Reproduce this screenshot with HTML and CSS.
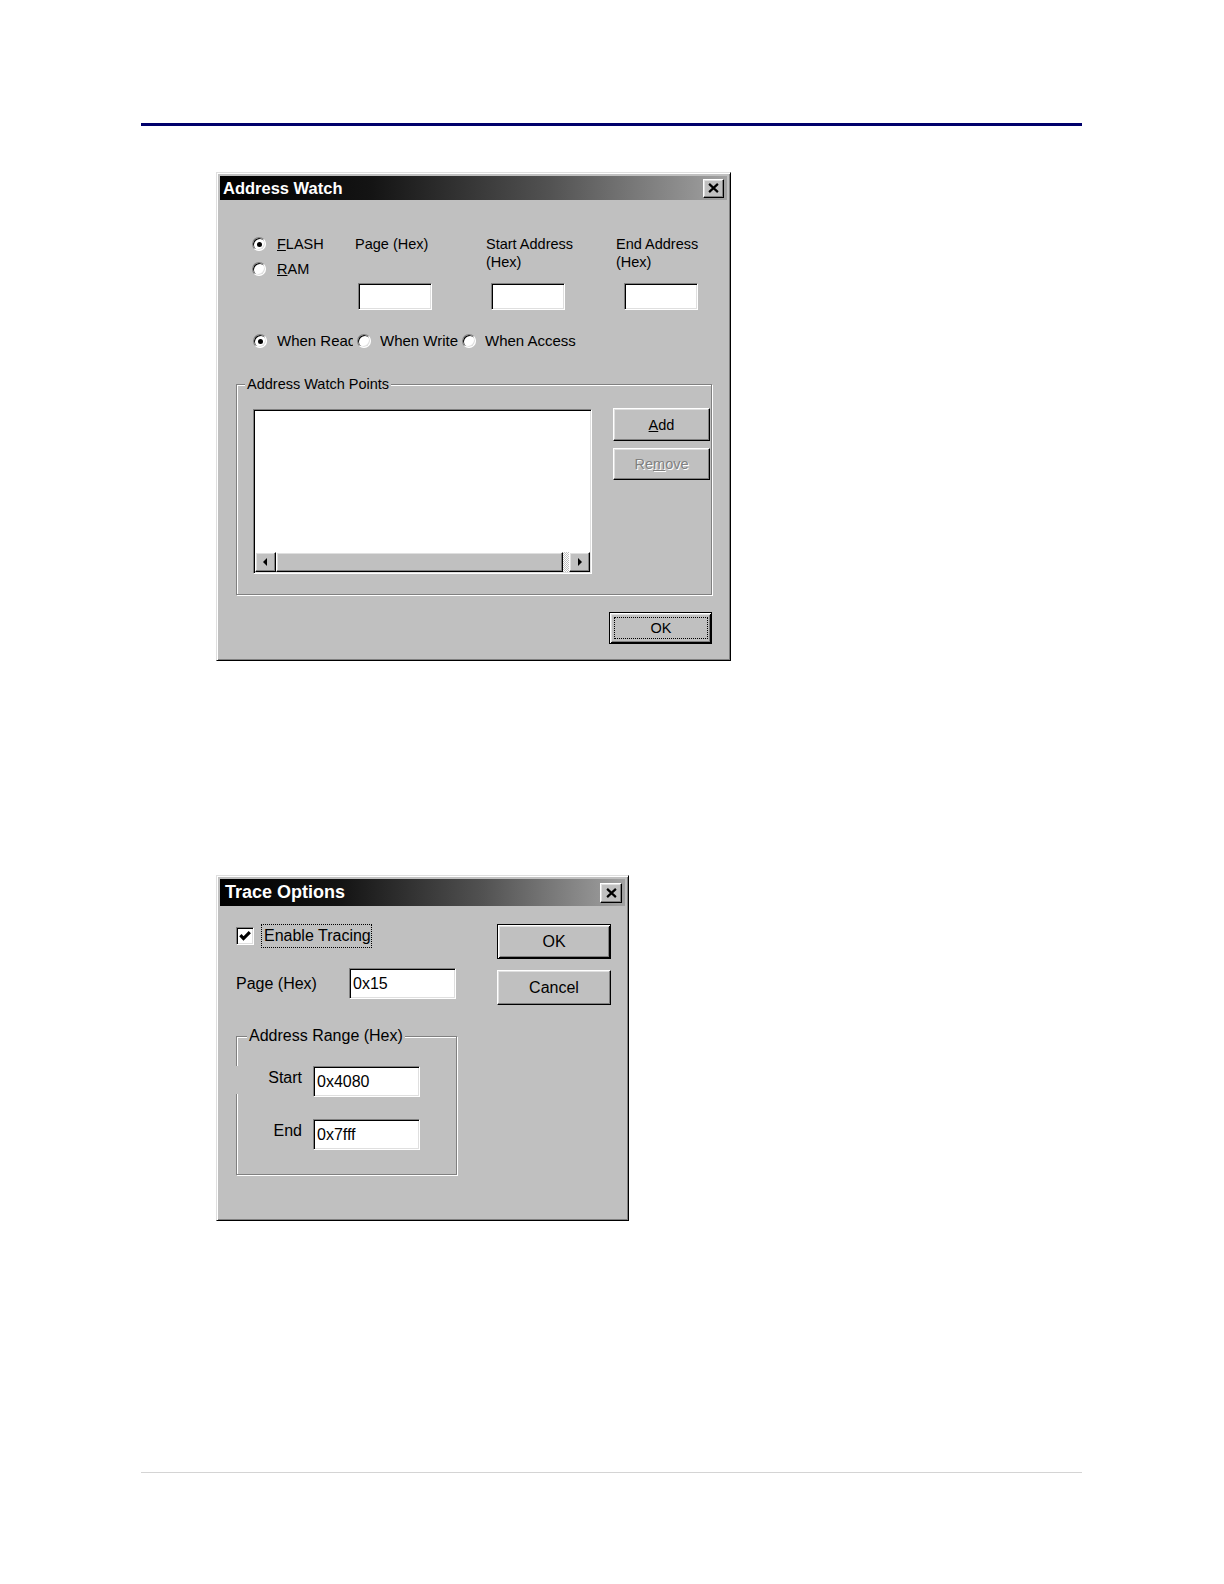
FILE: index.html
```html
<!DOCTYPE html>
<html lang="en">
<head>
<meta charset="utf-8">
<title>Address Watch / Trace Options</title>
<link rel="stylesheet" href="styles.css">
</head>
<body>
<div class="page">
  <div class="rule-top"></div>

  <div class="win aw">
    <div class="titlebar">
      <span>Address Watch</span>
      <span class="close raised"><svg width="11" height="10" viewBox="0 0 8 7"><path d="M0.8 0.5 L7.2 6.5 M7.2 0.5 L0.8 6.5" stroke="#000" stroke-width="1.6" fill="none"/></svg></span>
    </div>
    <div class="aw-body">
      <div class="aw-grid">
        <div class="radios">
          <div class="radio-item"><span class="radio on"></span><span class="lbl"><u>F</u>LASH</span></div>
          <div class="radio-item"><span class="radio"></span><span class="lbl"><u>R</u>AM</span></div>
        </div>
        <div class="col-label c2">Page (Hex)</div>
        <div class="col-label c3">Start Address<br>(Hex)</div>
        <div class="col-label c4">End Address<br>(Hex)</div>
        <div class="field sunken f2"></div>
        <div class="field sunken f3"></div>
        <div class="field sunken f4"></div>
      </div>

      <div class="when-row">
        <div class="radio-item w1"><span class="radio on"></span><span class="lbl">When Read</span></div>
        <div class="radio-item w2"><span class="radio"></span><span class="lbl">When Write</span></div>
        <div class="radio-item w3"><span class="radio"></span><span class="lbl">When Access</span></div>
      </div>

      <fieldset class="group aw-group">
        <legend>Address Watch Points</legend>
        <div class="aw-group-inner">
          <div class="listbox sunken">
            <div class="hscroll">
              <span class="sb-btn raised"><svg width="5" height="8" viewBox="0 0 5 8"><path d="M4 0 L0 4 L4 8 Z" fill="#000"/></svg></span>
              <span class="sb-thumb raised"></span>
              <span class="sb-track"></span>
              <span class="sb-btn raised"><svg width="5" height="8" viewBox="0 0 5 8"><path d="M1 0 L5 4 L1 8 Z" fill="#000"/></svg></span>
            </div>
          </div>
          <div class="btn-col">
            <div class="btn raised add"><u>A</u>dd</div>
            <div class="btn raised remove">Re<u>m</u>ove</div>
          </div>
        </div>
      </fieldset>

      <div class="ok-row">
        <div class="btn default aw-ok"><span class="focus">OK</span></div>
      </div>
    </div>
  </div>

  <div class="win to">
    <div class="titlebar">
      <span>Trace Options</span>
      <span class="close raised"><svg width="11" height="10" viewBox="0 0 8 7"><path d="M0.8 0.5 L7.2 6.5 M7.2 0.5 L0.8 6.5" stroke="#000" stroke-width="1.6" fill="none"/></svg></span>
    </div>
    <div class="to-body">
      <div class="to-left">
        <div class="check-row">
          <span class="check sunken"><svg width="12" height="12" viewBox="0 0 8 8"><path d="M0.9 3.4 L3 5.7 L7.2 1.4" stroke="#000" stroke-width="2.1" fill="none"/></svg></span>
          <span class="check-label">Enable Tracing</span>
        </div>
        <div class="page-row">
          <span class="page-label">Page (Hex)</span>
          <div class="field sunken to-field">0x15</div>
        </div>
        <fieldset class="group to-group">
          <legend>Address Range (Hex)</legend>
          <div class="to-group-inner">
            <div class="range-row gap-row">
              <span class="range-label">Start</span>
              <div class="field sunken to-field">0x4080</div>
            </div>
            <div class="range-row">
              <span class="range-label">End</span>
              <div class="field sunken to-field">0x7fff</div>
            </div>
          </div>
        </fieldset>
      </div>
      <div class="to-right">
        <div class="btn default to-ok">OK</div>
        <div class="btn raised to-cancel">Cancel</div>
      </div>
    </div>
  </div>

  <div class="rule-bottom"></div>
</div>
</body>
</html>
```

FILE: styles.css
```css
* { box-sizing: border-box; }

body {
  margin: 0;
  background: #fff;
  font-family: "Liberation Sans", Arial, sans-serif;
  color: #000;
}

.page {
  width: 1224px;
  min-height: 1584px;
  padding: 123px 0 0 141px;
}

.rule-top {
  width: 941px;
  height: 3px;
  background: #00006b;
}

.rule-bottom {
  width: 941px;
  height: 1px;
  background: #d4d4d4;
  margin-top: 251px;
}

/* ---------- generic Win95 pieces ---------- */
.win {
  background: #c0c0c0;
  border: 1px solid;
  border-color: #dfdfdf #000 #000 #dfdfdf;
  box-shadow: inset 1px 1px #fff, inset -1px -1px #808080;
  padding: 3px;
}

.titlebar {
  display: flex;
  align-items: center;
  justify-content: space-between;
  color: #fff;
  font-weight: bold;
  white-space: nowrap;
  background: linear-gradient(90deg, #000 0%, #141414 30%, #525252 65%, #a2a2a2 100%);
}

.raised {
  background: #c0c0c0;
  border: 1px solid;
  border-color: #fff #000 #000 #fff;
  box-shadow: inset -1px -1px #808080, inset 1px 1px #dfdfdf;
}

.sunken {
  background: #fff;
  border: 1px solid;
  border-color: #808080 #fff #fff #808080;
  box-shadow: inset 1px 1px #000, inset -1px -1px #dfdfdf;
}

.close {
  display: flex;
  align-items: center;
  justify-content: center;
  flex: none;
}

.radio {
  width: 14px;
  height: 14px;
  flex: none;
  border-radius: 50%;
  background: #fff;
  border: 1px solid;
  border-color: #808080 #fff #fff #808080;
  box-shadow: inset 1px 1px #000, inset -1px -1px #dfdfdf;
  display: flex;
  align-items: center;
  justify-content: center;
}

.radio.on::after {
  content: "";
  width: 5px;
  height: 5px;
  border-radius: 50%;
  background: #000;
}

.radio-item {
  display: flex;
  align-items: center;
  height: 18px;
  line-height: 18px;
  white-space: nowrap;
}

.btn {
  display: flex;
  align-items: center;
  justify-content: center;
  white-space: nowrap;
}

.btn.default {
  background: #c0c0c0;
  border: 1px solid #000;
  box-shadow: inset 1px 1px #fff, inset -1px -1px #000, inset 2px 2px #dfdfdf, inset -2px -2px #808080;
}

.group {
  margin: 0;
  padding: 0;
  min-width: 0;
  border: 1px solid #808080;
  box-shadow: 1px 1px 0 #fff, inset 1px 1px 0 #fff;
}

.group legend {
  padding: 0 2px;
  line-height: 18px;
  background: #c0c0c0;
}

/* ---------- Address Watch ---------- */
.aw {
  width: 515px;
  height: 489px;
  margin: 46px 0 0 75px;
  font-size: 14.5px;
}

.aw .titlebar {
  height: 24px;
  padding: 0 3px;
  font-size: 16.5px;
}

.aw .close {
  width: 21px;
  height: 19px;
}

.aw-body {
  padding: 35px 0 0 16px;
}

.aw-grid {
  display: grid;
  grid-template-columns: 103px 131px 130px 100px;
  grid-template-rows: 48px 27px;
  margin-left: 16px;
  line-height: 18px;
}

.radios {
  grid-column: 1;
  grid-row: 1 / span 2;
  display: flex;
  flex-direction: column;
  gap: 7px;
}

.radios .lbl { margin-left: 11px; }

.col-label { grid-row: 1; white-space: nowrap; }
.c2 { grid-column: 2; }
.c3 { grid-column: 3; }
.c4 { grid-column: 4; }

.aw .field {
  grid-row: 2;
  width: 74px;
  height: 27px;
}
.f2 { grid-column: 2; margin-left: 3px; }
.f3 { grid-column: 3; margin-left: 5px; }
.f4 { grid-column: 4; margin-left: 8px; }

.when-row {
  display: flex;
  margin: 22px 0 0 17px;
  font-size: 15px;
}

.when-row .lbl { margin-left: 10px; overflow: hidden; }
.w1 { width: 104px; }
.w1 .lbl { width: 76px; }
.w2 { width: 105px; }
.w2 .lbl { margin-left: 9px; }
.w3 .lbl { margin-left: 9px; }

.aw-group {
  width: 476px;
  margin-top: 25px;
}

.aw-group legend { margin-left: 8px; }

.aw-group-inner {
  display: flex;
  align-items: flex-start;
  gap: 21px;
  padding: 16px 0 20px 16px;
}

.listbox {
  width: 339px;
  height: 165px;
  padding: 1px;
  display: flex;
  flex-direction: column;
  justify-content: flex-end;
}

.hscroll {
  display: flex;
  height: 20px;
}

.sb-btn {
  width: 21px;
  flex: none;
  display: flex;
  align-items: center;
  justify-content: center;
}

.sb-thumb { flex: 1; }

.sb-track {
  width: 6px;
  flex: none;
  background: repeating-conic-gradient(#c0c0c0 0 25%, #fff 0 50%) 0 0 / 2px 2px;
}

.btn-col {
  display: flex;
  flex-direction: column;
  gap: 7px;
  margin-top: -1px;
}

.btn-col .btn { width: 97px; }
.add { height: 33px; }
.remove {
  height: 32px;
  color: #808080;
  text-shadow: 1px 1px 0 #fff;
}

.ok-row {
  display: flex;
  justify-content: flex-end;
  padding-right: 15px;
  margin-top: 17px;
}

.aw-ok {
  width: 103px;
  height: 32px;
  padding: 4px 3px 4px 4px;
  align-items: stretch;
}

.focus {
  flex: 1;
  display: flex;
  align-items: center;
  justify-content: center;
  border: 1px dotted #000;
}

/* ---------- Trace Options ---------- */
.to {
  width: 413px;
  height: 346px;
  margin: 214px 0 0 75px;
  font-size: 16px;
}

.to .titlebar {
  height: 27px;
  padding: 0 3px 0 5px;
  font-size: 18px;
}

.to .close {
  width: 22px;
  height: 20px;
}

.to-body {
  display: flex;
  align-items: flex-start;
  padding: 18px 0 0 16px;
}

.to-left {
  width: 221px;
  display: flex;
  flex-direction: column;
}

.check-row {
  display: flex;
  align-items: center;
  height: 24px;
}

.check {
  width: 18px;
  height: 18px;
  display: flex;
  align-items: center;
  justify-content: center;
  flex: none;
}

.check-label {
  margin-left: 7px;
  height: 24px;
  line-height: 22px;
  padding: 0 0 0 2px;
  border: 1px dotted #000;
  white-space: nowrap;
}

.page-row {
  display: flex;
  align-items: center;
  margin-top: 20px;
}

.page-label { width: 113px; }

.to-field {
  width: 107px;
  height: 31px;
  padding-left: 3px;
  line-height: 29px;
}

.to-group {
  width: 221px;
  margin-top: 28px;
}

.to-group legend { margin-left: 10px; }

.to-group-inner {
  display: flex;
  flex-direction: column;
  gap: 22px;
  padding: 21px 0 24px 0;
}

.range-row {
  display: flex;
  align-items: flex-start;
}

.gap-row { position: relative; }
/* reproduces the break in the group frame beside "Start" */
.gap-row::before {
  content: "";
  position: absolute;
  left: -2px;
  top: 0;
  width: 3px;
  height: 28px;
  background: #c0c0c0;
}

.range-label {
  width: 65px;
  margin-right: 11px;
  text-align: right;
  line-height: 24px;
}

.to-right {
  display: flex;
  flex-direction: column;
  gap: 11px;
  margin-left: 40px;
}

.to-ok {
  width: 114px;
  height: 35px;
}

.to-cancel {
  width: 114px;
  height: 35px;
}
```
